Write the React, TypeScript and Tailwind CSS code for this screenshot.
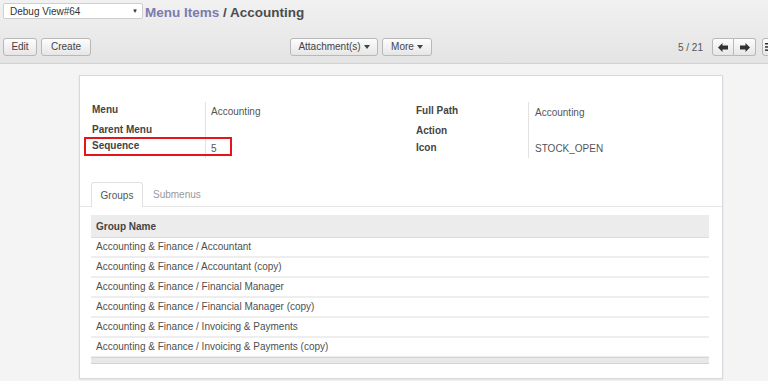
import React from 'react';

const groups = [
    'Accounting & Finance / Accountant',
    'Accounting & Finance / Accountant (copy)',
    'Accounting & Finance / Financial Manager',
    'Accounting & Finance / Financial Manager (copy)',
    'Accounting & Finance / Invoicing & Payments',
    'Accounting & Finance / Invoicing & Payments (copy)',
];

const Btn: React.FC<{ children?: React.ReactNode; className?: string }> = ({ children, className = '' }) => (
    <button className={`h-[18px] shrink-0 rounded-[3px] border border-[#b8b8b8] bg-gradient-to-b from-[#fdfdfd] to-[#e6e6e6] text-[10px] text-[#444] leading-none flex items-center justify-center ${className}`}>
        {children}
    </button>
);

const Caret = () => <span className="ml-[3px] inline-block w-0 h-0 border-l-[3px] border-r-[3px] border-t-[4px] border-l-transparent border-r-transparent border-t-[#444]" />;

const Arrow: React.FC<{ dir: 'l' | 'r' }> = ({ dir }) => (
    <svg width="10" height="9" viewBox="0 0 10 9" className={dir === 'r' ? 'rotate-180' : ''}>
        <path d="M0 4.5 L4.5 0 L4.5 2.5 L10 2.5 L10 6.5 L4.5 6.5 L4.5 9 Z" fill="#333" />
    </svg>
);

export default function App() {
    return (
        <div className="relative w-[768px] h-[381px] overflow-hidden bg-[#f4f4f4] font-['Liberation_Sans',Arial,sans-serif] text-[#4c4c4c]">
            {/* control panel */}
            <div className="h-[64px] bg-gradient-to-b from-[#f1f1f1] to-[#e4e4e4] border-b border-[#d2d2d2] flex flex-col">
                <div className="flex items-center h-[20px] pt-[2px] pl-[3px]">
                    <div className="w-[140px] h-[16px] bg-white border border-[#cfcfcf] rounded-[2px] flex items-center justify-between pl-[6px] pr-[4px] text-[10px] text-[#333]">
                        <span>Debug View#64</span>
                        <span className="text-[6px]">▼</span>
                    </div>
                    <div className="ml-[2px] text-[13.5px] font-bold leading-none mt-[4px]">
                        <span className="text-[#7c7bad]">Menu Items</span>
                        <span className="text-[#4c4c4c]"> / Accounting</span>
                    </div>
                </div>
                <div className="flex items-center h-[18px] mt-[18px] pl-[3px]">
                    <Btn className="w-[34px]">Edit</Btn>
                    <Btn className="w-[50px] ml-[4px]">Create</Btn>
                    <div className="flex ml-[199px] gap-[4px]">
                        <Btn className="w-[88px]">Attachment(s)<Caret /></Btn>
                        <Btn className="w-[50px]">More<Caret /></Btn>
                    </div>
                    <div className="ml-auto flex items-center -mr-[14px]">
                        <span className="text-[10px] text-[#555] mr-[9px]">5 / 21</span>
                        <div className="flex">
                            <Btn className="w-[22px] rounded-r-none"><Arrow dir="l" /></Btn>
                            <Btn className="w-[22px] rounded-l-none border-l-0"><Arrow dir="r" /></Btn>
                        </div>
                        <Btn className="w-[20px] ml-[6px] justify-start pl-[2px]">
                            <svg width="4" height="8" viewBox="0 0 4 8"><rect x="0" y="0" width="4" height="1.5" fill="#333" /><rect x="0" y="3.2" width="4" height="1.5" fill="#333" /><rect x="0" y="6.4" width="4" height="1.5" fill="#333" /></svg>
                        </Btn>
                    </div>
                </div>
            </div>

            {/* sheet */}
            <div className="ml-[79px] mt-[11px] w-[644px] h-[304px] bg-white border border-[#d8d8df] shadow-[0_1px_2px_rgba(0,0,0,0.08)] pt-[26px]">
                <div className="flex px-[12px]">
                    <div className="w-[324px] flex">
                        <div className="w-[113px] text-[10px] font-bold text-[#444]">
                            <div className="h-[18px]">Menu</div>
                            <div className="h-[18px] pt-[2px]">Parent Menu</div>
                            <div className="h-[18px]">Sequence</div>
                        </div>
                        <div className="border-l border-[#e2e2e2] pl-[5px] text-[10px] text-[#555]">
                            <div className="h-[18px] pt-[2px]">Accounting</div>
                            <div className="h-[18px]"></div>
                            <div className="h-[18px] pt-[3px]">5</div>
                        </div>
                    </div>
                    <div className="flex">
                        <div className="w-[112px] text-[10px] font-bold text-[#444]">
                            <div className="h-[20px] pt-[1px]">Full Path</div>
                            <div className="h-[18px] pt-[1px]">Action</div>
                            <div className="h-[18px]">Icon</div>
                        </div>
                        <div className="border-l border-[#e2e2e2] pl-[6px] text-[10px] text-[#555]">
                            <div className="h-[20px] pt-[3px]">Accounting</div>
                            <div className="h-[18px]"></div>
                            <div className="h-[18px] pt-[1px]">STOCK_OPEN</div>
                        </div>
                    </div>
                </div>

                {/* tabs */}
                <div className="mt-[24px] border-b border-[#e6e6e6] flex px-[11px] h-[25px]">
                    <div className="w-[52px] h-[25px] border border-b-0 border-[#e0e0e0] rounded-t-[3px] bg-white text-[10px] text-[#555] flex items-center justify-center -mb-px">Groups</div>
                    <div className="ml-[10px] text-[10px] text-[#999] flex items-center">Submenus</div>
                </div>

                <div className="mx-[11px] mt-[8px] w-[618px]">
                    <div className="h-[23px] bg-[#ececec] text-[10px] font-bold text-[#444] flex items-center pl-[5px] border-b border-[#dcdcdc]">Group Name</div>
                    {groups.map((g) => (
                        <div key={g} className="h-[20px] border-b-2 border-[#eeeeee] text-[10px] text-[#505050] flex items-center pl-[5px] pb-[2px]">{g}</div>
                    ))}
                    <div className="h-[7px] bg-[#e8e8e8] border-t border-b border-[#d4d4d4] -mt-[1px]" />
                </div>
            </div>

            {/* highlight */}
            <div className="absolute left-[84px] top-[137px] w-[148px] h-[19px] border-2 border-[#e8141b]" />
        </div>
    );
}
